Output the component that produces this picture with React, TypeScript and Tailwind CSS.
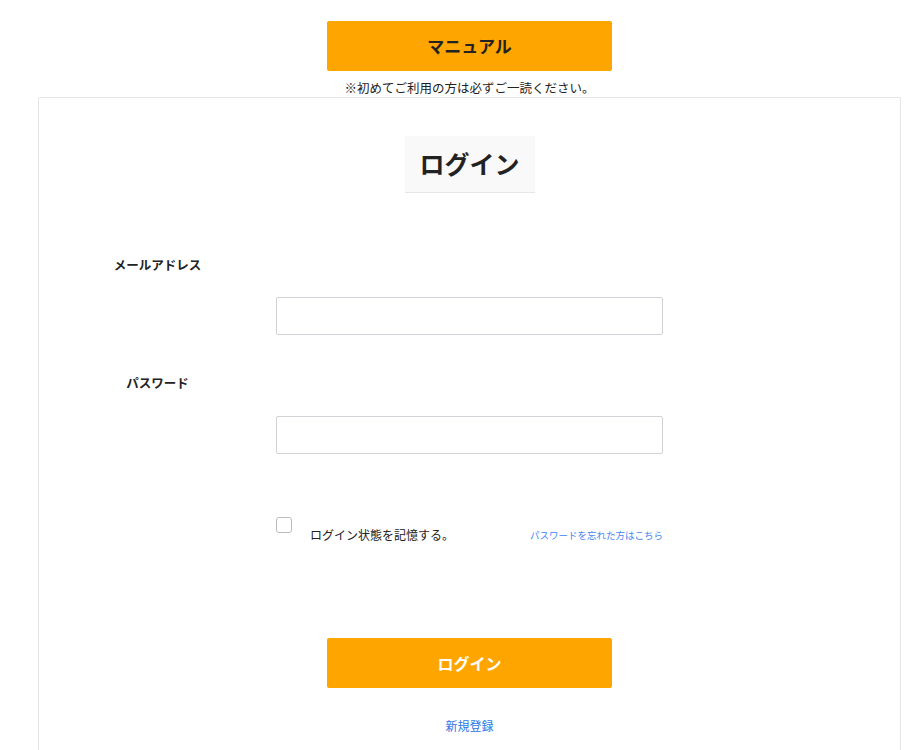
import { useState } from 'react';

const font = { fontFamily: '"Noto Sans CJK JP", "Noto Sans", sans-serif' };

export default function App() {
  const [remember, setRemember] = useState(false);

  return (
    <div className="min-h-[750px] bg-white text-[#222]" style={font}>
      <div className="ml-[38px] w-[863px]">
        {/* Manual */}
        <div className="flex flex-col items-center pt-[21px]">
          <button className="w-[285px] h-[50px] rounded-[2px] bg-[#ffa500] text-[17px] font-bold text-[#222]">
            マニュアル
          </button>
          <p className="mt-[8px] text-[12.5px] leading-[18px]">※初めてご利用の方は必ずご一読ください。</p>
        </div>

        {/* Card */}
        <div className="min-h-[653px] border-x border-t border-[#e6e6e6] rounded-t-[2px]">
          <div className="flex justify-center mt-[38px]">
            <h1 className="w-[130px] h-[57px] flex items-center justify-center bg-[#f9f9f9] border-b border-[#e6e6e6] text-[25px] font-bold">
              ログイン
            </h1>
          </div>

          <div className="grid grid-cols-[237px_387px]">
            <label className="mt-[62px] text-center text-[12.5px] font-bold leading-[20px]">メールアドレス</label>
            <div />
            <div />
            <input
              type="email"
              className="mt-[22px] h-[38px] border border-[#cfd3d8] rounded-[2px] px-3 text-[14px] outline-none"
            />
            <label className="mt-[38px] text-center text-[12.5px] font-bold leading-[20px]">パスワード</label>
            <div />
            <div />
            <input
              type="password"
              className="mt-[23px] h-[38px] border border-[#cfd3d8] rounded-[2px] px-3 text-[14px] outline-none"
            />
            <div />
            <div className="mt-[63px] flex items-start">
              <button
                onClick={() => setRemember(!remember)}
                className="w-[16px] h-[16px] shrink-0 border border-[#b9bdc2] rounded-[3px] bg-white"
              >
                {remember && <span className="block text-[11px] leading-[14px] text-[#222]">✓</span>}
              </button>
              <span className="ml-[18px] mt-[8px] text-[12px] leading-[20px]">ログイン状態を記憶する。</span>
              <a href="#" className="ml-auto mt-[10px] text-[9.5px] leading-[16px] text-[#3f86f2]">
                パスワードを忘れた方はこちら
              </a>
            </div>
          </div>

          <div className="flex flex-col items-center">
            <button className="mt-[93px] w-[285px] h-[50px] rounded-[2px] bg-[#ffa500] text-[16px] font-bold text-white">
              ログイン
            </button>
            <a href="#" className="mt-[29px] text-[12px] leading-[18px] text-[#2a78e4]">
              新規登録
            </a>
          </div>
        </div>
      </div>
    </div>
  );
}
